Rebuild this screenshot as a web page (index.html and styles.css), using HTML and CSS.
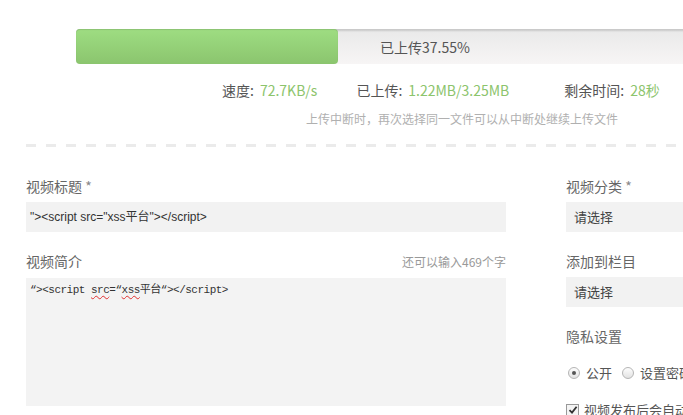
FILE: index.html
```html
<!DOCTYPE html>
<html lang="zh-CN">
<head>
<meta charset="utf-8">
<title>上传视频</title>
<link rel="stylesheet" href="styles.css">
</head>
<body>
<div class="page">
  <div class="upload">
    <div class="bar">
      <div class="bar-fill" style="width:37.55%"></div>
      <div class="bar-text">已上传37.55%</div>
    </div>
    <div class="stats">
      <div class="stat stat-speed"><span class="stat-label">速度:</span><span class="stat-value">72.7KB/s</span></div>
      <div class="stat stat-done"><span class="stat-label">已上传:</span><span class="stat-value">1.22MB/3.25MB</span></div>
      <div class="stat stat-left"><span class="stat-label">剩余时间:</span><span class="stat-value">28秒</span></div>
    </div>
    <div class="hint">上传中断时，再次选择同一文件可以从中断处继续上传文件</div>
  </div>
  <div class="divider"></div>
  <div class="form">
    <div class="col-main">
      <div class="label">视频标题 <span class="req">*</span></div>
      <div class="input">"&gt;&lt;script src="xss平台"&gt;&lt;/script&gt;</div>
      <div class="label label-row"><span>视频简介</span><span class="count">还可以输入469个字</span></div>
      <div class="textarea">“&gt;&lt;script <span class="typo">src</span>=“<span class="typo">xss</span>平台“&gt;&lt;/script&gt;</div>
    </div>
    <div class="col-side">
      <div class="label">视频分类 <span class="req">*</span></div>
      <div class="select">请选择</div>
      <div class="label">添加到栏目</div>
      <div class="select">请选择</div>
      <div class="label label-privacy">隐私设置</div>
      <div class="radios">
        <span class="radio checked"></span><span class="radio-text">公开</span>
        <span class="radio"></span><span class="radio-text">设置密码</span>
      </div>
      <div class="check-row">
        <span class="checkbox"><svg width="10" height="10" viewBox="0 0 10 10"><path d="M1.5 5.2 L4 7.6 L8.6 1.8" fill="none" stroke="#333" stroke-width="1.8"/></svg></span><span class="check-text">视频发布后会自动同步到动态</span>
      </div>
    </div>
  </div>
</div>
</body>
</html>
```

FILE: styles.css
```css
html, body {
  margin: 0;
  padding: 0;
  background: #fff;
  overflow: hidden;
}
body {
  font-family: "Noto Sans CJK SC", "Noto Sans", sans-serif;
  color: #555;
}
.page {
  width: 1000px;
  padding-left: 26px;
  box-sizing: border-box;
}
.upload {
  padding-top: 29px;
  padding-left: 50px;
}
.bar {
  display: grid;
  width: 698px;
  height: 35px;
  border-radius: 4px;
  background: linear-gradient(#e9e9e9, #f7f5f5);
  box-shadow: inset 0 2px 2px rgba(0, 0, 0, 0.14);
}
.bar > * {
  grid-area: 1 / 1;
}
.bar-fill {
  height: 35px;
  border-radius: 4px;
  background: linear-gradient(#9edd82, #8bc56e);
  box-shadow: inset 0 1px 1px rgba(0, 0, 0, 0.12);
}
.bar-text {
  justify-self: center;
  align-self: center;
  font-size: 14px;
  line-height: 20px;
  color: #555;
}
.stats {
  display: flex;
  margin-top: 16px;
  padding-left: 146px;
  font-size: 14px;
  line-height: 20px;
}
.stat-label {
  color: #555;
  margin-right: 6px;
}
.stat-value {
  color: #8cc46c;
}
.stat-done {
  margin-left: 39px;
}
.stat-left {
  margin-left: 55px;
}
.hint {
  margin-top: 10px;
  padding-left: 230px;
  font-size: 12px;
  line-height: 18px;
  color: #b0b0b0;
}
.divider {
  margin-top: 16px;
  height: 3px;
  background: repeating-linear-gradient(to right, #ebebeb 0 10px, transparent 10px 20px);
}
.form {
  display: flex;
  gap: 60px;
  margin-top: 29px;
}
.col-main {
  width: 480px;
  flex: none;
}
.col-side {
  width: 240px;
  flex: none;
}
.label {
  font-size: 14px;
  line-height: 20px;
  color: #666;
  margin-bottom: 6px;
}
.req {
  color: #888;
}
.label-row {
  display: flex;
  justify-content: space-between;
  align-items: baseline;
}
.count {
  font-size: 12px;
  color: #999;
}
.input,
.select {
  height: 30px;
  line-height: 30px;
  background: #f2f2f2;
  box-sizing: border-box;
  margin-bottom: 19px;
}
.input {
  padding-left: 4px;
  font-family: "Liberation Sans", Arial, "Noto Sans CJK SC", sans-serif;
  font-size: 12px;
  color: #333;
}
.select {
  padding-left: 8px;
  font-size: 13px;
  color: #444;
}
.textarea {
  height: 128px;
  background: #f3f3f3;
  box-sizing: border-box;
  padding: 4px 4px 0 4px;
  font-family: "Liberation Mono", "Noto Sans CJK SC", monospace;
  font-size: 11px;
  letter-spacing: -0.5px;
  line-height: 16px;
  color: #333;
}
.typo {
  text-decoration: underline wavy #e03030;
  text-decoration-thickness: 1px;
  text-underline-offset: 2px;
}
.label-privacy {
  margin-top: 1px;
}
.radios {
  display: flex;
  align-items: center;
  margin-top: 17px;
  padding-left: 2px;
  font-size: 13px;
  line-height: 20px;
  color: #555;
}
.radio {
  width: 10px;
  height: 10px;
  border: 1px solid #b5b5b5;
  border-radius: 50%;
  background: linear-gradient(#fdfdfd, #e2e2e2);
  display: grid;
  place-items: center;
  flex: none;
}
.radio.checked::after {
  content: "";
  width: 4px;
  height: 4px;
  border-radius: 50%;
  background: #555;
}
.radio-text {
  margin-left: 6px;
  margin-right: 10px;
}
.check-row {
  display: flex;
  align-items: center;
  margin-top: 17px;
  font-size: 13px;
  line-height: 20px;
  color: #555;
}
.checkbox {
  width: 11px;
  height: 11px;
  border: 1px solid #999;
  background: #f4f4f4;
  display: grid;
  place-items: center;
  flex: none;
}
.check-text {
  margin-left: 5px;
}
```
